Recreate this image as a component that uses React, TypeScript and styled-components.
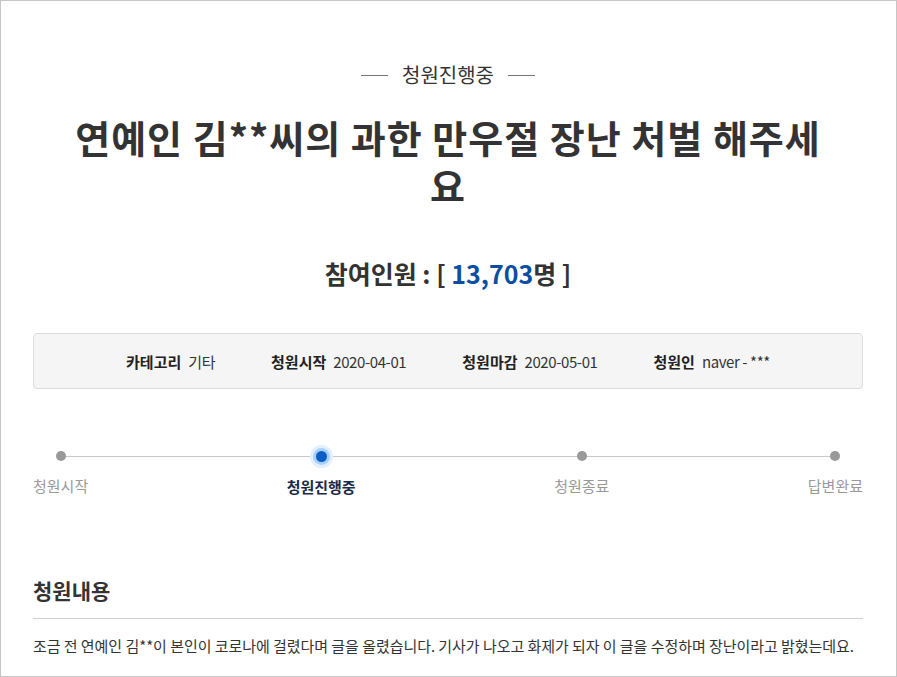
import styled, { createGlobalStyle } from 'styled-components';

const GlobalStyle = createGlobalStyle`
  html, body {
    margin: 0;
    padding: 0;
    background: #fff;
  }
  body {
    font-family: 'Noto Sans CJK KR', 'Noto Sans', sans-serif;
    color: #333;
  }
`;

const Page = styled.div`
  width: 897px;
  height: 677px;
  box-sizing: border-box;
  border: 1px solid #c6c6c6;
  padding: 62px 33px 0 32px;
  overflow: hidden;
  display: flex;
  flex-direction: column;
`;

const Status = styled.div`
  display: flex;
  align-items: center;
  justify-content: center;
  gap: 14px;
  font-size: 20px;
  line-height: 24px;
  color: #333;

  &::before,
  &::after {
    content: '';
    width: 27px;
    height: 1px;
    background: #777;
  }
`;

const Title = styled.h1`
  margin: 26px auto 0;
  max-width: 770px;
  font-size: 38px;
  line-height: 48px;
  font-weight: 700;
  text-align: center;
  color: #333;
  letter-spacing: 1px;
`;

const Count = styled.div`
  margin-top: 47px;
  text-align: center;
  font-size: 25px;
  line-height: 34px;
  font-weight: 700;
  color: #333;
`;

const CountNum = styled.span`
  color: #0b4ea2;
`;

const InfoBox = styled.div`
  margin-top: 43px;
  height: 56px;
  box-sizing: border-box;
  border: 1px solid #dcdcdc;
  border-radius: 4px;
  background: #f5f5f5;
  display: flex;
  align-items: center;
  justify-content: center;
  gap: 56px;
  font-size: 15px;
`;

const InfoItem = styled.div`
  display: flex;
  gap: 7px;
  align-items: baseline;
`;

const InfoLabel = styled.span`
  font-weight: 700;
  color: #222;
`;

const InfoValue = styled.span`
  color: #333;
  letter-spacing: -0.4px;
`;

const Steps = styled.div`
  position: relative;
  margin-top: 62px;
  display: flex;
  justify-content: space-between;

  &::before {
    content: '';
    position: absolute;
    top: 5px;
    left: 27px;
    right: 27px;
    height: 1px;
    background: #c8c8c8;
  }
`;

const Step = styled.div`
  position: relative;
  display: flex;
  flex-direction: column;
  align-items: center;
  gap: 15px;
`;

const Dot = styled.span<{ $active?: boolean }>`
  width: ${({ $active }) => ($active ? 11 : 10)}px;
  height: ${({ $active }) => ($active ? 11 : 10)}px;
  border-radius: 50%;
  background: ${({ $active }) => ($active ? '#0a5ec4' : '#999')};
  box-shadow: ${({ $active }) =>
    $active ? '0 0 0 3px #a9d0fb, 0 0 0 6px #e2effd' : 'none'};
`;

const StepLabel = styled.span<{ $active?: boolean }>`
  font-size: 15px;
  line-height: 20px;
  color: ${({ $active }) => ($active ? '#1c2a4a' : '#999')};
  font-weight: ${({ $active }) => ($active ? 700 : 400)};
`;

const SectionTitle = styled.h2`
  margin: 79px 0 0;
  padding-bottom: 14px;
  border-bottom: 1px solid #cfcfcf;
  font-size: 21px;
  line-height: 28px;
  font-weight: 700;
  color: #333;
`;

const Body = styled.p`
  margin: 15px 0 0;
  font-size: 15px;
  line-height: 24px;
  color: #333;
  letter-spacing: -0.05px;
`;

const info = [
  { label: '카테고리', value: '기타' },
  { label: '청원시작', value: '2020-04-01' },
  { label: '청원마감', value: '2020-05-01' },
  { label: '청원인', value: 'naver - ***' },
];

const steps = ['청원시작', '청원진행중', '청원종료', '답변완료'];
const activeStep = 1;

export default function App() {
  return (
    <>
      <GlobalStyle />
      <Page>
        <Status>청원진행중</Status>
        <Title>연예인 김**씨의 과한 만우절 장난 처벌 해주세요</Title>
        <Count>
          참여인원 : [ <CountNum>13,703</CountNum>명 ]
        </Count>
        <InfoBox>
          {info.map((item) => (
            <InfoItem key={item.label}>
              <InfoLabel>{item.label}</InfoLabel>
              <InfoValue>{item.value}</InfoValue>
            </InfoItem>
          ))}
        </InfoBox>
        <Steps>
          {steps.map((s, i) => (
            <Step key={s}>
              <Dot $active={i === activeStep} />
              <StepLabel $active={i === activeStep}>{s}</StepLabel>
            </Step>
          ))}
        </Steps>
        <SectionTitle>청원내용</SectionTitle>
        <Body>
          조금 전 연예인 김**이 본인이 코로나에 걸렸다며 글을 올렸습니다. 기사가 나오고 화제가 되자 이 글을 수정하며 장난이라고 밝혔는데요.
        </Body>
      </Page>
    </>
  );
}
